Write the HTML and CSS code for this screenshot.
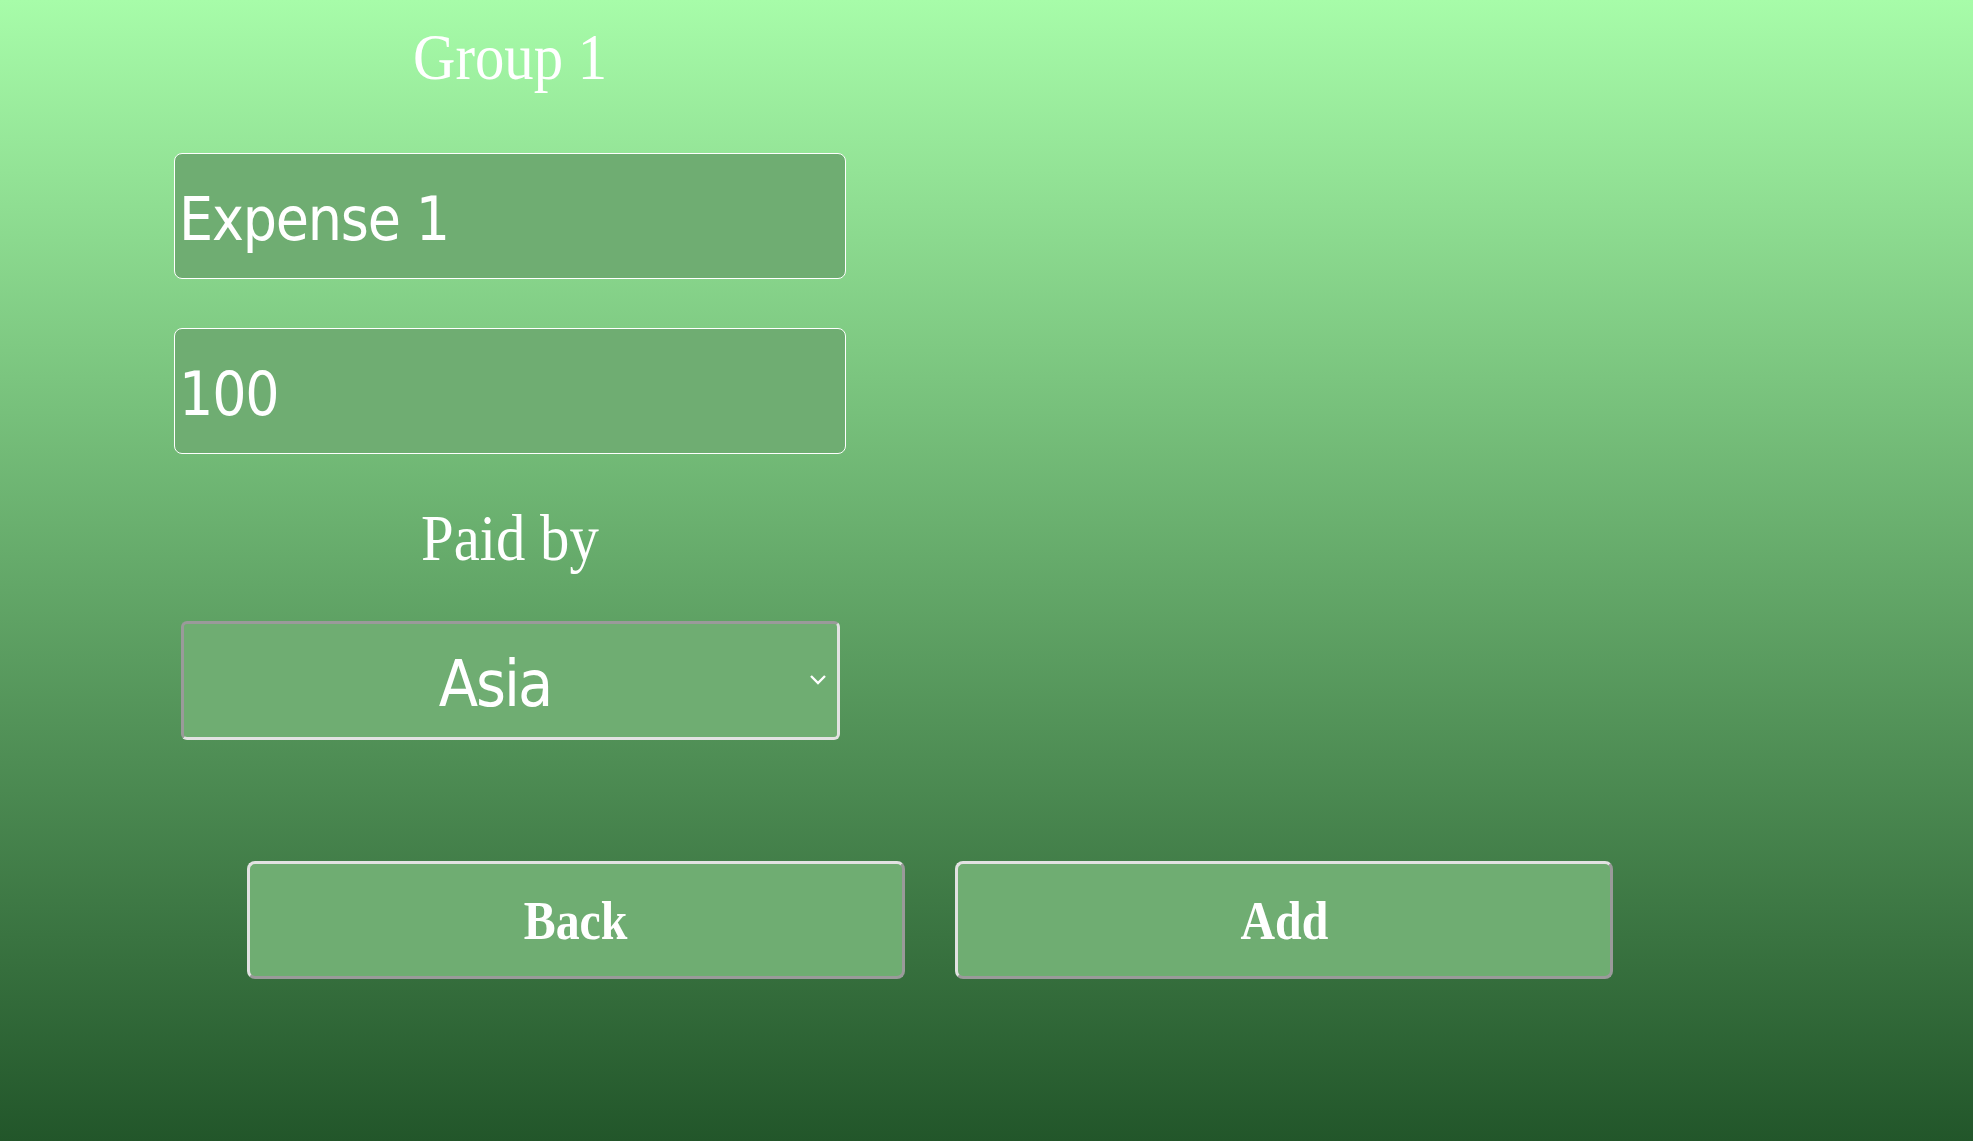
FILE: index.html
```html
<!DOCTYPE html>
<html lang="en">
<head>
<meta charset="utf-8">
<title>Add expense</title>
<link rel="stylesheet" href="styles.css">
</head>
<body>
  <main class="page">
    <section class="panel">
      <h1 class="title"><span class="squeeze">Group 1</span></h1>
      <input class="field" type="text" value="Expense 1">
      <input class="field field-second" type="text" value="100">
      <h2 class="label"><span class="squeeze">Paid by</span></h2>
      <div class="select-wrap">
        <select class="select">
          <option>Asia</option>
        </select>
        <svg class="chevron" width="18" height="12" viewBox="0 0 18 12"><path d="M2 2 L9 9 L16 2" fill="none" stroke="#ffffff" stroke-width="2.4"/></svg>
      </div>
    </section>
    <div class="actions">
      <button class="btn" type="button"><span class="squeeze">Back</span></button>
      <button class="btn" type="button"><span class="squeeze">Add</span></button>
    </div>
  </main>
</body>
</html>
```
FILE: styles.css
```css
html, body {
  margin: 0;
  padding: 0;
}

body {
  min-height: 100vh;
  background: linear-gradient(to bottom, #a7fca9 0%, #22562a 100%);
  color: #ffffff;
  font-family: "Liberation Serif", "Times New Roman", serif;
}

.page {
  height: 1141px;
  display: flex;
  flex-direction: column;
}

.panel {
  width: 672px;
  margin-left: 174px;
  display: flex;
  flex-direction: column;
}

.squeeze {
  display: inline-block;
  transform: scaleX(0.89);
}

.title,
.label {
  margin: 0;
  font-size: 66px;
  font-weight: normal;
  line-height: 76px;
  text-align: center;
  color: #ffffff;
}

.title {
  margin-top: 19px;
}

.field {
  box-sizing: border-box;
  width: 672px;
  height: 126px;
  margin: 0;
  padding: 6px 2px 0 4px;
  border: 1px solid #ffffff;
  border-radius: 8px;
  background: #6fad72;
  color: #ffffff;
  font-family: "DejaVu Sans Condensed", "DejaVu Sans", sans-serif;
  font-stretch: condensed;
  font-size: 60px;
  letter-spacing: -1.2px;
  outline: none;
}

.field:first-of-type {
  margin-top: 58px;
}

.field-second {
  margin-top: 49px;
}

.label {
  margin-top: 46px;
}

.select-wrap {
  position: relative;
  align-self: center;
  width: 659px;
  height: 119px;
  margin-top: 45px;
}

.select {
  box-sizing: border-box;
  width: 100%;
  height: 100%;
  margin: 0;
  padding: 6px 30px 0 0;
  border: 3px solid;
  border-color: #9a9a9a #e2e2e2 #e2e2e2 #9a9a9a;
  border-radius: 6px;
  background: #6fad72;
  color: #ffffff;
  font-family: "DejaVu Sans Condensed", "DejaVu Sans", sans-serif;
  font-stretch: condensed;
  font-size: 64px;
  letter-spacing: -2px;
  text-align: center;
  text-align-last: center;
  appearance: none;
  -webkit-appearance: none;
  outline: none;
}

.chevron {
  position: absolute;
  right: 13px;
  top: 53px;
  pointer-events: none;
}

.actions {
  display: flex;
  gap: 50px;
  margin-left: 247px;
  margin-top: 121px;
}

.btn {
  box-sizing: border-box;
  width: 658px;
  height: 118px;
  margin: 0;
  padding: 0;
  border: 3px solid;
  border-color: #e2e2e2 #9a9a9a #9a9a9a #e2e2e2;
  border-radius: 8px;
  background: #6fad72;
  color: #ffffff;
  font-family: "Liberation Serif", "Times New Roman", serif;
  font-weight: bold;
  font-size: 55px;
  cursor: pointer;
}

.btn .squeeze {
  transform: scaleX(0.87);
}
```
